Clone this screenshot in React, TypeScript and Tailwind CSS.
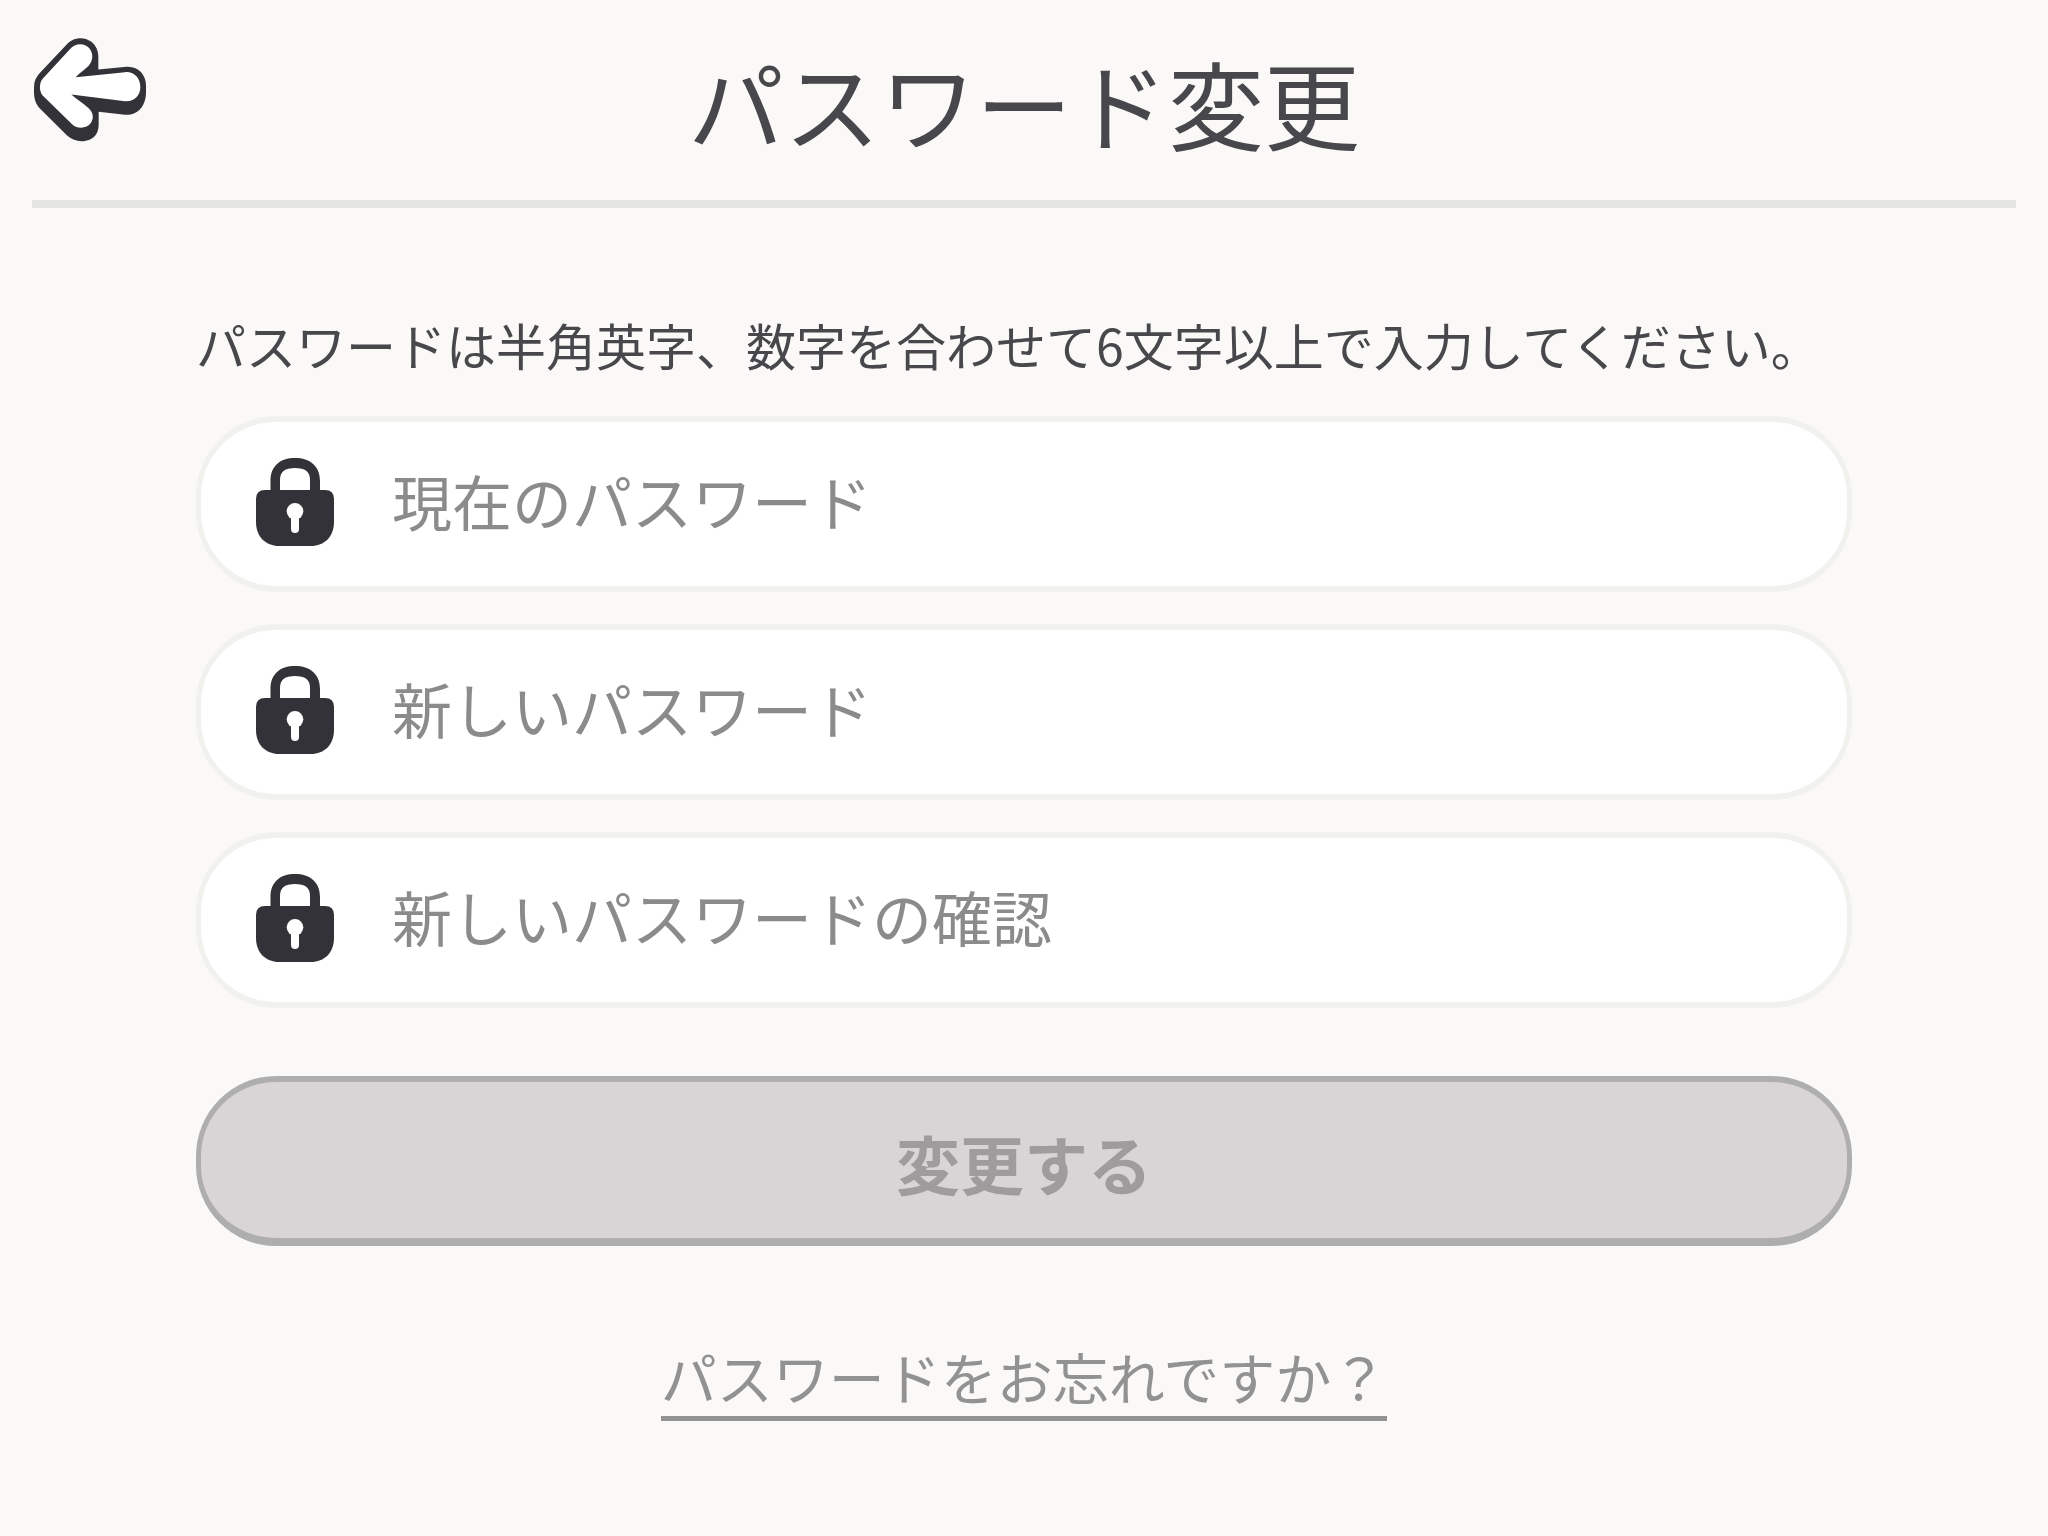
import React from "react";

function BackArrow() {
  return (
    <svg viewBox="66 53 342 311" className="h-[104px] w-[114px]" aria-hidden="true">
      <path
        fill="#333238"
        d="M72 200C72 183 78 170 88 159L170 72C190 49 222 48 243 63C259 75 265 92 265 110V147L350 139C386 137 408 164 408 195V215C408 256 384 285 345 283L266 274V312C266 335 256 350 240 357C215 368 190 361 172 346L92 266C78 253 72 235 72 215Z"
      />
      <path
        fill="#fff"
        d="M98 175L179 87C195 67 225 66 239 85C251 101 249 121 236 136C226 146 211 156 197 170L345 155C375 153 391 175 391 200C391 225 372 244 345 242L184 222C202 239 220 248 236 263C250 277 252 292 243 307C230 325 203 326 187 312L98 225C87 212 87 188 98 175Z"
      />
    </svg>
  );
}

function LockIcon() {
  return (
    <svg viewBox="21 18 78 88" className="h-[88px] w-[78px] shrink-0" aria-hidden="true">
      <path
        fill="#333238"
        d="M35.5 51V41C35.5 26 45 18 60 18S85 26 85 41V51H75V40C75 31.500 70 28 60 28S45 31.500 45 40V51Z"
      />
      <path
        fill="#333238"
        d="M30 50H90Q99 50 99 59V82C99 97 89 106 76 106H44C31 106 21 97 21 82V59Q21 50 30 50Z"
      />
      <circle cx="60" cy="71.3" r="8.3" fill="#fff" />
      <path d="M60 74V89" stroke="#fff" strokeWidth="8" strokeLinecap="round" />
    </svg>
  );
}

function PasswordField({ name, label }: { name: string; label: string }) {
  return (
    <label className="flex h-44 items-center gap-[58px] rounded-[80px] border-x-[5px] border-y-[6px] border-[#f1f1ee] bg-white px-[55px] pb-1">
      <LockIcon />
      <input
        type="password"
        name={name}
        aria-label={label}
        placeholder={label}
        className="h-28 min-w-0 flex-1 bg-transparent pb-[6px] text-[60px] text-[#48474b] outline-none placeholder:text-[#8b8b8b]"
      />
    </label>
  );
}

const fields = [
  { name: "current-password", label: "現在のパスワード" },
  { name: "new-password", label: "新しいパスワード" },
  { name: "confirm-password", label: "新しいパスワードの確認" },
];

export default function App() {
  return (
    <div
      lang="ja"
      className="min-h-screen bg-[#faf9f7] font-['Noto_Sans_CJK_JP',sans-serif] text-[#48474b]"
    >
      <header className="mx-8 grid h-[208px] grid-cols-[1fr_auto_1fr] items-center border-b-8 border-[#e4e4e2]">
        <button type="button" aria-label="戻る" className="mt-[38px] self-start justify-self-start">
          <BackArrow />
        </button>
        <h1 className="pt-1 text-8xl font-normal">パスワード変更</h1>
      </header>
      <main className="px-[196px] pt-[104px]">
        <form className="flex flex-col" onSubmit={(event) => event.preventDefault()}>
          <p className="whitespace-nowrap text-[50px] leading-[64px]">
            パスワードは半角英字、数字を合わせて6文字以上で入力してください。
          </p>
          <div className="mt-10 flex flex-col gap-8">
            {fields.map((field) => (
              <PasswordField key={field.name} {...field} />
            ))}
          </div>
          <button
            type="submit"
            disabled
            className="mt-[68px] h-[170px] rounded-[80px] border-x-[5px] border-t-[6px] border-b-8 border-[#afaeaf] bg-[#d9d5d6] pt-1 text-[64px] font-bold text-[#9f9c9e]"
          >
            変更する
          </button>
          <a
            href="#forgot"
            className="mt-[90px] self-center border-b-[5px] border-[#929292] text-[56px] leading-[80px] text-[#929292]"
          >
            パスワードをお忘れですか？
          </a>
        </form>
      </main>
    </div>
  );
}
